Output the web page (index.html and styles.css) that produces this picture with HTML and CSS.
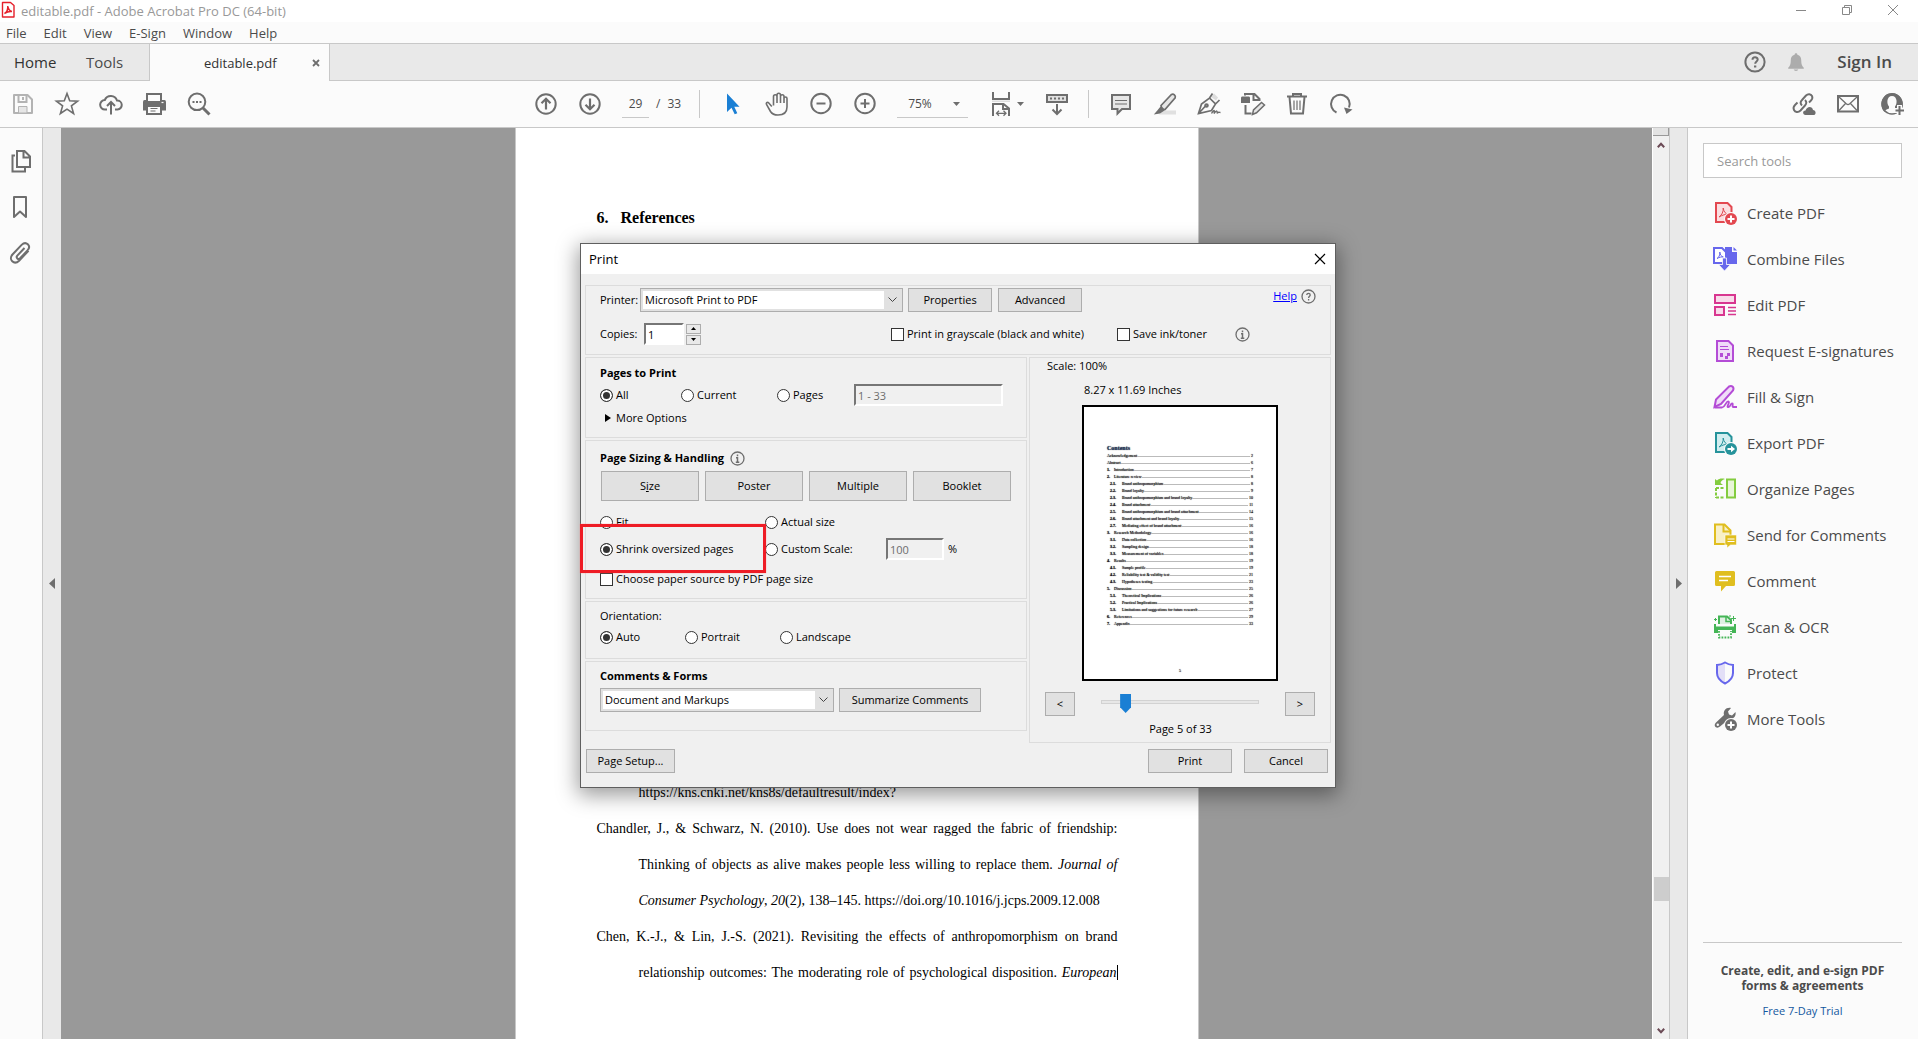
FILE: index.html
```html
<!DOCTYPE html>
<html lang="en">
<head>
<meta charset="utf-8">
<title>editable.pdf - Adobe Acrobat Pro DC (64-bit)</title>
<link rel="stylesheet" href="styles.css">
</head>
<body>
<header class="titlebar">
  <svg class="app-icon" viewBox="0 0 14 16"><path d="M1.500.500h8l3.500 3v11.500h-11.500z" fill="#fff" stroke="#e5202b" stroke-width="1.400" stroke-linejoin="round"/><path d="M3.500 11.500c2-1 3.500-4 3.300-7.500.4 3 2 5 4.200 5.500-2.500-.4-5 .3-7.500 2z" fill="none" stroke="#e5202b" stroke-width="1.500"/></svg>
  <span class="title">editable.pdf - Adobe Acrobat Pro DC (64-bit)</span>
  <div class="window-controls">
    <button aria-label="Minimize"><svg viewBox="0 0 12 12"><path d="M1 6.500h10"/></svg></button>
    <button aria-label="Restore"><svg viewBox="0 0 12 12"><path d="M1.500 3.500h7v7h-7zM3.500 3.500v-2h7v7h-2"/></svg></button>
    <button aria-label="Close"><svg viewBox="0 0 12 12"><path d="M1 1l10 10M11 1L1 11"/></svg></button>
  </div>
</header>
<nav class="menubar">
  <button>File</button><button>Edit</button><button>View</button><button>E-Sign</button><button>Window</button><button>Help</button>
</nav>
<div class="tabbar">
  <button class="tab-home">Home</button>
  <button class="tab-tools">Tools</button>
  <div class="tab-doc"><span>editable.pdf</span><button aria-label="Close tab"><svg viewBox="0 0 8 8"><path d="M1 1l6 6M7 1L1 7" stroke="#6e6e6e" stroke-width="1.800"/></svg></button></div>
  <div class="tab-rest">
    <button class="icon-btn" aria-label="Help"><svg class="ic" viewBox="0 0 24 24"><circle cx="12" cy="12" r="9.600"/><path d="M9.500 9.800c0-3.300 5.200-3.200 5.200-.2 0 1.900-2.500 1.900-2.500 4.200"/><path d="M11 15.500h2.300v2H11z" class="solid"/></svg></button>
    <button class="icon-btn bell" aria-label="Notifications"><svg viewBox="0 0 24 24"><path d="M12 2.500c1 0 1.500.7 1.500 1.500 3 .8 4.200 3 4.200 6 0 4.500 1 6.500 2.800 8.300v1H3.500v-1C5.300 16.500 6.300 14.500 6.300 10c0-3 1.200-5.200 4.200-6 0-.8.5-1.500 1.500-1.500zM9.500 20.300h5c-.4 2-4.600 2-5 0z" fill="#acacac"/></svg></button>
    <button class="sign-in">Sign In</button>
  </div>
</div>
<div class="toolbar">
  <div class="tools-left">
    <button class="icon-btn" aria-label="Save"><svg class="ic faint" viewBox="0 0 24 24"><path d="M3 3h13.500L21 7.500V21H3z" stroke-linejoin="round"/><path d="M7.500 3v7h8V3M12 5v3"/><path d="M7.500 21v-6.500h8.500V21z" fill="#e6e6e6" stroke-width="1"/></svg></button>
    <button class="icon-btn" aria-label="Star"><svg class="ic" viewBox="0 0 24 24"><path d="M12 1.500l2.700 7.300 7.900.3-6.200 4.800 2.200 7.600L12 17.100l-6.600 4.400 2.200-7.600L1.400 9.100l7.900-.3z" stroke-width="1.600"/></svg></button>
    <button class="icon-btn" aria-label="Share to cloud"><svg class="ic" viewBox="0 0 24 24"><path d="M8 17.500H6A4.700 4.700 0 0 1 5.800 8 6.500 6.500 0 0 1 18 8.500a4.500 4.500 0 0 1 .5 9H16"/><path d="M12 22.500V10.500M8 14l4-4 4 4"/></svg></button>
    <button class="icon-btn" aria-label="Print"><svg class="ic" viewBox="0 0 24 24"><path d="M0 10q0-2 1.500-2h20Q23 8 23 10v8.500H0z" class="solid"/><path d="M4 9V2h14v7" fill="#fbfbfb"/><path d="M4 14h14v8H4z" fill="#fbfbfb"/><path d="M7.500 16.500h7M7.500 19h5" stroke-width="1.200"/><path d="M18.500 10.500h2" stroke="#fbfbfb" stroke-width="1.200"/></svg></button>
    <button class="icon-btn" aria-label="Find"><svg class="ic" viewBox="0 0 24 24"><circle cx="10" cy="9.800" r="8.300"/><path d="M16 16l6.500 6.500" stroke-width="3"/><path d="M5.500 9h2v2h-2zM9 9h2v2H9zM12.500 9h2v2h-2z" class="solid"/></svg></button>
  </div>
  <div class="tools-mid">
    <button class="icon-btn" aria-label="Previous page"><svg class="ic" viewBox="0 0 24 24"><circle cx="12" cy="12" r="9.700"/><path d="M12 17.500V7M7.500 11.300L12 6.800l4.500 4.500" stroke-width="2.200"/></svg></button>
    <button class="icon-btn" aria-label="Next page"><svg class="ic" viewBox="0 0 24 24"><circle cx="12" cy="12" r="9.700"/><path d="M12 6.500V17M7.500 12.700l4.500 4.500 4.500-4.500" stroke-width="2.200"/></svg></button>
    <div class="page-nav"><input class="page-num" aria-label="Page number" value="29"><span>/</span><span>33</span></div>
    <i class="sep"></i>
    <button class="icon-btn select-tool" aria-label="Select"><svg viewBox="0 0 24 24"><path d="M6 1.500V20l4.500-4.300 3.200 6.500 2.600-1-3-6.500h5.200z" fill="#1a7fd4"/></svg></button>
    <button class="icon-btn" aria-label="Pan"><svg class="ic" viewBox="0 0 24 24"><path d="M6.800 14.500L3.600 10.800C2 9.800.8 11 1.500 12.300l4 7.200C7 22 9 23 13 23c6 0 9-3 9-8V6.500c0-2-3-2-3 0V11 4.500c0-2.300-3.500-2.300-3.500 0V11 3c0-2.300-3.500-2.300-3.500 0v8V4.500c0-2.300-3.500-2.300-3.500 0v9" stroke-width="1.600"/></svg></button>
    <button class="icon-btn" aria-label="Zoom out"><svg class="ic" viewBox="0 0 24 24"><circle cx="12" cy="11.500" r="9.700"/><path d="M7.500 11.500h9"/></svg></button>
    <button class="icon-btn" aria-label="Zoom in"><svg class="ic" viewBox="0 0 24 24"><circle cx="12" cy="11.500" r="9.700"/><path d="M7.500 11.500h9M12 7v9"/></svg></button>
    <button class="zoom-level"><span>75%</span><svg class="tri" viewBox="0 0 7 4"><path d="M0 0h7L3.500 4z"/></svg></button>
    <button class="icon-btn fit" aria-label="Fit width"><svg class="ic" viewBox="0 0 24 24"><path d="M4 0v7h16V0" /><path d="M3 8.500h18v1.500H3z" fill="#ddd" stroke="none"/><path d="M4 24V12h10.500L20 16.500V24M14 12v5h5.500"/><path d="M8 21.300h9M10 18.800l-2.500 2.500 2.500 2.500M14.500 18.800l2.500 2.500-2.500 2.500" stroke-width="1.300"/></svg><svg class="tri" viewBox="0 0 7 4"><path d="M0 0h7L3.500 4z"/></svg></button>
    <button class="icon-btn" aria-label="Read mode"><svg class="ic" viewBox="0 0 24 24"><path d="M2 3h20v7H2z" fill="#e0e0e0"/><path d="M5 6.500h14" stroke-dasharray="2 2"/><path d="M12 12v9.500M7.500 17.500l4.500 4.500 4.500-4.500"/></svg></button>
    <i class="sep wide"></i>
    <button class="icon-btn" aria-label="Comment"><svg class="ic" viewBox="0 0 24 24"><path d="M3 3h18v14h-8l-4.500 4.500V17H3z" fill="#e6e6e6"/><path d="M6 8.500h12M6 12h12" stroke-width="1.200"/></svg></button>
    <button class="icon-btn" aria-label="Highlight"><svg class="ic" viewBox="0 0 24 24"><path d="M10 18.500h13v4H6z" fill="#e0e0e0" stroke="none"/><path d="M8 13.500L18.500 2.500c2-1.200 4.500 1 3.700 3.300L12 17.500c-1.500.5-4-2-4-4z" fill="#e6e6e6" stroke-width="1.700"/><path d="M7.500 14.500l4 4L7 21.500.8 22.500l3.500-4z" class="solid"/></svg></button>
    <button class="icon-btn" aria-label="Sign"><svg class="ic" viewBox="0 0 24 24"><path d="M14 5l3-3.500 4 4-2 3z" fill="#ddd" stroke="none"/><path d="M1.500 21.500L4.500 12 12.500 6l6 6-4 6.500-13 3zM2 21l6.500-7M12.500 6l3-4.500M18.500 12l4-4" stroke-width="1.700"/><circle cx="9.500" cy="13.500" r="1.300"/><path d="M14.500 21.500c3-5 3.500-3 2.500 0 3-4 3.500-2.500 3 0 1-2 2.500-1 3.500-1" stroke-width="1.400"/></svg></button>
    <button class="icon-btn" aria-label="Edit document"><svg class="ic" viewBox="0 0 24 24"><path d="M0 6q0-1.500 1-1.500h7q1 0 1 1.500v5H0z" class="solid"/><path d="M4 3.500V2h9.500L18.500 7v2M12.500 2v6h5.500M4.500 13v8.500h6"/><path d="M11.500 22.500l1-4.500 8-7.500 3 2.500-8 7.800z" stroke-width="1.500" fill="#e6e6e6"/></svg></button>
    <button class="icon-btn" aria-label="Delete"><svg class="ic" viewBox="0 0 24 24"><path d="M2 4.500h20M8 4V2h8v2M4.500 5L6 21.500h12L19.500 5"/><path d="M9 8.500v9.500M12 8.500v9.500M15 8.500v9.500" stroke-width="1.200"/></svg></button>
    <button class="icon-btn" aria-label="Rotate"><svg class="ic" viewBox="0 0 24 24"><path d="M7.500 20.500A9.300 9.300 0 1 1 20 15.500"/><path d="M15 15.500l8.500 2-6 4.500z" class="solid"/></svg></button>
  </div>
  <div class="tools-right">
    <button class="icon-btn" aria-label="Copy link"><svg class="ic" viewBox="0 0 24 24"><path d="M10 13.500c-2-2-2-3.500 0-5.500l4-4.500c2-2 5-1.500 6 .5s.5 3-1 4.500l-2 2M13 8c2 2 1.800 3.500 0 5.500l-4.500 5C6 21 3 20 2 18s-.5-3.500 1-5l2.500-2.500" stroke-width="1.900"/><path d="M13.500 23c-3-.2-3.300-4.500 0-4.500C15 13.500 20.500 14 21 18c3 0 3.500 4.500 1 5z" class="solid" /></svg></button>
    <button class="icon-btn" aria-label="Email"><svg class="ic" viewBox="0 0 24 24"><path d="M2 4h20v15.500H2z"/><path d="M3 5l7.500 7q1.500 1 3 0L21 5M3 18.500l6.500-7M21 18.500l-6.500-7" stroke-width="1.300"/></svg></button>
    <button class="icon-btn" aria-label="Add people"><svg class="ic" viewBox="0 0 24 24"><circle cx="12" cy="12" r="10" stroke-width="1.500"/><path d="M12 1C3 1-2 12 4.500 20c1-2.500 3-3 4.500-3.500v-2C6.500 12 6.500 4 12 4s5.500 8 3 10.500v2l3 1.500 4-1C25 9 20 1 12 1z" class="solid"/><path d="M19.500 13v11M14.500 18.500H24" stroke="#fbfbfb" stroke-width="5"/><path d="M19.500 14v9M15.500 18.500H24"/></svg></button>
  </div>
</div>
<main class="workspace">
  <aside class="rail">
    <button aria-label="Page thumbnails"><svg class="ic" viewBox="0 0 24 24"><path d="M9 2h7.500l5.500 5.500V18H9zM15.500 2v6.500H22"/><path d="M7 6.500H4.500V22.500h12.500V19" /></svg></button>
    <button aria-label="Bookmarks"><svg class="ic" viewBox="0 0 24 24"><path d="M6 2h12v20l-6-5.500L6 22z" stroke-linejoin="round"/></svg></button>
    <button aria-label="Attachments"><svg class="ic" viewBox="0 0 24 24"><path d="M16.500 7l-7.200 7.600c-1.800 2 .9 4.600 2.800 2.700l7.400-7.900c4.200-4.600-1.400-9.800-5.900-5.500L4.500 13.500c-4.500 5 1.600 11 6.600 6.200l9.400-10" stroke-width="2"/></svg></button>
  </aside>
  <button class="strip strip-left" aria-label="Collapse navigation"><svg viewBox="0 0 6 11"><path d="M6 0v11L0 5.500z"/></svg></button>
  <section class="doc">
    <article class="sheet">
      <h1><span>6.</span>References</h1>
      <div class="refs">
        <p class="last in">https://kns.cnki.net/kns8s/defaultresult/index?</p>
        <p>Chandler, J., &amp; Schwarz, N. (2010). Use does not wear ragged the fabric of friendship:</p>
        <p class="in">Thinking of objects as alive makes people less willing to replace them. <em>Journal of</em></p>
        <p class="last in"><em>Consumer Psychology</em>, <em>20</em>(2), 138–145. https://doi.org/10.1016/j.jcps.2009.12.008</p>
        <p>Chen, K.-J., &amp; Lin, J.-S. (2021). Revisiting the effects of anthropomorphism on brand</p>
        <p class="in caret">relationship outcomes: The moderating role of psychological disposition. <em>European</em></p>
      </div>
    </article>
  </section>
  <div class="scrollbar">
    <i class="splitter"></i>
    <svg viewBox="0 0 8 6"><path d="M.8 5.200L4 1.800l3.200 3.400"/></svg>
    <i class="thumb"></i>
    <svg viewBox="0 0 8 6"><path d="M.8.800L4 4.200 7.200.8"/></svg>
  </div>
  <button class="strip strip-right" aria-label="Collapse tools"><svg viewBox="0 0 6 11"><path d="M0 0v11l6-5.500z"/></svg></button>
  <aside class="panel">
    <input class="search" type="search" placeholder="Search tools" aria-label="Search tools">
    <ul>
      <li><a href="#"><svg viewBox="0 0 24 24"><path d="M3 2h11.500l4 4v15H3z" fill="#fbdfe1" stroke="#e34850" stroke-width="2"/><path d="M6 16c3-2 4.500-5.500 4.200-9 .6 4 2.500 6 5.300 6.500-3-.5-6 .5-9.500 2.500z" fill="none" stroke="#e34850"/><circle cx="18" cy="18" r="7" fill="#fbfbfb"/><circle cx="18" cy="18" r="6" fill="#e34850"/><path d="M18 14.500v7M14.500 18h7" stroke="#fff" stroke-width="2"/></svg>Create PDF</a></li>
      <li><a href="#"><svg viewBox="0 0 24 24"><path d="M1 1h8l4 4v11H1z" fill="#fff" stroke="#6767ec" stroke-width="2"/><path d="M12 0h7v5h5v12H12z" fill="#6767ec"/><path d="M20.500 0L24 3.500h-3.500z" fill="#6767ec"/><path d="M4 11.500c2-1 3-3.500 2.800-6.500.4 3 1.500 4.500 3.500 5-2-.3-4 .3-6.300 1.500z" fill="none" stroke="#6767ec"/><path d="M9.500 11h4v6.500h4L11.500 24l-6-6.500h4z" fill="#6767ec" stroke="#fbfbfb" stroke-width=".8"/></svg>Combine Files</a></li>
      <li><a href="#"><svg viewBox="0 0 24 24"><g fill="#f8dcea" stroke="#d83790" stroke-width="2"><path d="M2 2h20v8H2zM2 14h9v8H2z"/></g><path d="M15 14.500h8M15 18h8M15 21.500h8" stroke="#d83790" stroke-width="1.300"/></svg>Edit PDF</a></li>
      <li><a href="#"><svg viewBox="0 0 24 24"><path d="M4 2h11.500l4.500 4.500V22H4z" fill="#f0dcf8" stroke="#b44cd6" stroke-width="2"/><path d="M7 7.500h8M7 10.500h9" stroke="#b44cd6"/><path d="M7 14h3v4H7zM14 14h3v3h-3zM12 17h3v3h-3z" fill="#b44cd6"/></svg>Request E-signatures</a></li>
      <li><a href="#"><svg viewBox="0 0 24 24"><path d="M1.500 22l1.500-7.500L16 1.500c3-1.500 5.500 1 4 4L8 19z" fill="#f0dcf8" stroke="#b44cd6" stroke-width="2"/><path d="M1.500 22.500H9c4-1 4-7 6.500-6 2 1-3 6 0 5.500 2 0 2.500-4.500 4-3.500 1 1-1 3.500 1 3.500h3.500" fill="none" stroke="#b44cd6" stroke-width="1.800"/></svg>Fill &amp; Sign</a></li>
      <li><a href="#"><svg viewBox="0 0 24 24"><path d="M3 2h11.500l4 4v15H3z" fill="#d3eef0" stroke="#26939b" stroke-width="2"/><path d="M6 16c3-2 4.500-5.500 4.200-9 .6 4 2.500 6 5.300 6.500-3-.5-6 .5-9.500 2.500z" fill="none" stroke="#26939b"/><circle cx="18" cy="18" r="7" fill="#fbfbfb"/><circle cx="18" cy="18" r="6" fill="#26939b"/><path d="M14.500 18h4" stroke="#fff" stroke-width="2"/><path d="M18 14.800l4 3.200-4 3.200z" fill="#fff"/></svg>Export PDF</a></li>
      <li><a href="#"><svg viewBox="0 0 24 24"><path d="M14 2.500h8v18h-8z" fill="#e8f5d8" stroke="#83cc3f" stroke-width="2"/><path d="M3 11h9M3 20.500h9M3 11v10" fill="none" stroke="#83cc3f" stroke-width="2" stroke-dasharray="3 1.500"/><path d="M2 2l2 1.500C6 1.500 9 1 12 2 9 3 8 4 7.500 6L10 8H2z" fill="#83cc3f"/></svg>Organize Pages</a></li>
      <li><a href="#"><svg viewBox="0 0 24 24"><path d="M2 1.500h9.500l6 6V21H2z" fill="#f8f0c8" stroke="#e0be1f" stroke-width="2"/><path d="M10.500 2v6.500H17" fill="none" stroke="#e0be1f" stroke-width="2"/><path d="M12 12h11.500v10h-6L14 25v-3h-2z" fill="#e0be1f" stroke="#fbfbfb" stroke-width=".6"/><path d="M14.500 16h7M14.500 18.500h7" stroke="#fff" stroke-width="1.200"/></svg>Send for Comments</a></li>
      <li><a href="#"><svg viewBox="0 0 24 24"><path d="M3.500 2h17q1.500 0 1.500 1.500v12q0 1.500-1.500 1.500H13l-5 5.500V17H3.500Q2 17 2 15.500v-12Q2 2 3.500 2z" fill="#e0be1f"/><path d="M6 7.500h12M6 11.500h9" stroke="#fff" stroke-width="1.500"/></svg>Comment</a></li>
      <li><a href="#"><svg viewBox="0 0 24 24"><path d="M6 9V1.500h8L18 5v4" fill="#dff0e2" stroke="#44b556" stroke-width="2"/><path d="M13 2v4.500h5" fill="none" stroke="#44b556" stroke-width="1.500"/><path d="M1 9h2v2.500h18V9h2v9h-4v-3H5v3H1z" fill="#44b556"/><path d="M6 16v6.500h12V16" fill="none" stroke="#44b556" stroke-width="1.800" stroke-dasharray="1.800 1.200"/><path d="M20.500 1v5M18 3.500h5M2.500 3v3M1 4.500h3M17 0v2" stroke="#44b556"/></svg>Scan &amp; OCR</a></li>
      <li><a href="#"><svg viewBox="0 0 24 24"><path d="M12 1.500v21C6 19.500 4 16.500 4 12V4z" fill="#e3dff7"/><path d="M12 1.500c2.500 1.500 5 2.300 8 2.500v8c0 4.500-2 7.500-8 10.500C6 19.500 4 16.500 4 12V4c3-.2 5.500-1 8-2.500z" fill="none" stroke="#6767ec" stroke-width="2"/></svg>Protect</a></li>
      <li><a href="#"><svg viewBox="0 0 24 24"><path d="M11 8c-1-4 2-8 7-7l-3 3.500 1 3 3 1L22.500 5c1 5-3 7.500-6.500 7L7 19.500C4 22.500-.5 19 3 15.500z" fill="#6e6e6e"/><circle cx="4.800" cy="17.800" r="1.200" fill="#fbfbfb"/><circle cx="18" cy="18" r="7" fill="#fbfbfb"/><circle cx="18" cy="18" r="6" fill="#6e6e6e"/><path d="M18 14.500v7M14.500 18h7" stroke="#fff" stroke-width="2"/></svg>More Tools</a></li>
    </ul>
    <footer>
      <strong>Create, edit, and e-sign PDF forms &amp; agreements</strong>
      <a href="#">Free 7-Day Trial</a>
    </footer>
  </aside>
</main>

<section class="dialog" role="dialog" aria-label="Print">
  <header><h2>Print</h2><button aria-label="Close"><svg viewBox="0 0 12 12"><path d="M1 1l10 10M11 1L1 11" stroke="#000" stroke-width="1.200"/></svg></button></header>
  <div class="dialog-body">
    <div class="group top">
      <div class="row printer">
        <label for="printer">Printer:</label>
        <div class="combo"><select id="printer"><option>Microsoft Print to PDF</option></select><svg viewBox="0 0 9 6"><path d="M.5.500l4 4 4-4"/></svg></div>
        <button class="btn">Properties</button>
        <button class="btn">Advanced</button>
        <div class="help"><a href="#">Help</a><svg class="info" viewBox="0 0 15 15"><circle cx="7.500" cy="7.500" r="6.500"/><path d="M5.800 6c0-2.200 3.400-2.200 3.400 0 0 1.300-1.600 1.300-1.600 3M7.600 10v1.500"/></svg></div>
      </div>
      <div class="row copies">
        <div class="spin"><label for="copies">Copies:</label><input id="copies" class="sunken" value="1"><div class="arrows"><button aria-label="More copies"><svg viewBox="0 0 5 3"><path d="M0 3h5L2.500 0z"/></svg></button><button aria-label="Fewer copies"><svg viewBox="0 0 5 3"><path d="M0 0h5L2.500 3z"/></svg></button></div></div>
        <label class="opt"><input type="checkbox">Print in grayscale (black and white)</label>
        <label class="opt"><input type="checkbox">Save ink/toner</label>
        <svg class="info" viewBox="0 0 15 15"><circle cx="7.500" cy="7.500" r="6.500"/><path d="M7.500 3.500v1.800M6 6.800h1.500v4M5.800 11.200h3.500" stroke-width="1.500"/></svg>
      </div>
    </div>
    <div class="columns">
      <div class="stack">
        <div class="group pages">
          <h3>Pages to Print</h3>
          <div class="row range">
            <label class="opt"><input type="radio" name="range" checked>All</label>
            <label class="opt"><input type="radio" name="range">Current</label>
            <label class="opt"><input type="radio" name="range">Pages</label>
            <input class="sunken" value="1 - 33" aria-label="Page range" disabled>
          </div>
          <button class="more"><svg viewBox="0 0 6 8"><path d="M0 0v8l6-4z"/></svg>More Options</button>
        </div>
        <div class="group sizing">
          <h3>Page Sizing &amp; Handling <svg class="info" viewBox="0 0 15 15"><circle cx="7.500" cy="7.500" r="6.500"/><path d="M7.500 3.500v1.800M6 6.800h1.500v4M5.800 11.200h3.500" stroke-width="1.500"/></svg></h3>
          <div class="modes"><button class="btn">S<u>i</u>ze</button><button class="btn">Poster</button><button class="btn">Multiple</button><button class="btn">Booklet</button></div>
          <div class="row scale">
            <label class="opt"><input type="radio" name="scale">Fit</label>
            <label class="opt"><input type="radio" name="scale">Actual size</label>
          </div>
          <div class="row scale custom">
            <label class="opt"><input type="radio" name="scale" checked>Shrink oversized pages</label>
            <label class="opt"><input type="radio" name="scale">Custom Scale:</label>
            <input class="sunken" value="100" aria-label="Custom scale" disabled><span>%</span>
          </div>
          <label class="opt"><input type="checkbox">Choose paper source by PDF page size</label>
        </div>
        <div class="group orient">
          <div>Orientation:</div>
          <div class="row">
            <label class="opt"><input type="radio" name="orient" checked>Auto</label>
            <label class="opt"><input type="radio" name="orient">Portrait</label>
            <label class="opt"><input type="radio" name="orient">Landscape</label>
          </div>
        </div>
        <div class="group forms">
          <h3><label for="forms">Comments &amp; Forms</label></h3>
          <div class="row">
            <div class="combo"><select id="forms"><option>Document and Markups</option></select><svg viewBox="0 0 9 6"><path d="M.5.500l4 4 4-4"/></svg></div>
            <button class="btn">Summarize Comments</button>
          </div>
        </div>
      </div>
      <div class="group preview">
        <div>Scale: 100%</div>
        <div class="dims">8.27 x 11.69 Inches</div>
        <div class="thumbnail">
          <h4>Contents</h4>
          <ol class="toc">
            <li><span>Acknowledgement</span><i></i>2</li>
            <li><span>Abstract</span><i></i>6</li>
            <li><b>1.</b><span>Introduction</span><i></i>7</li>
            <li><b>2.</b><span>Literature review</span><i></i>8</li>
            <li class="sub"><b>2.1.</b><span>Brand anthropomorphism</span><i></i>8</li>
            <li class="sub"><b>2.2.</b><span>Brand loyalty</span><i></i>9</li>
            <li class="sub"><b>2.3.</b><span>Brand anthropomorphism and brand loyalty</span><i></i>10</li>
            <li class="sub"><b>2.4.</b><span>Brand attachment</span><i></i>11</li>
            <li class="sub"><b>2.5.</b><span>Brand anthropomorphism and brand attachment</span><i></i>14</li>
            <li class="sub"><b>2.6.</b><span>Brand attachment and brand loyalty</span><i></i>15</li>
            <li class="sub"><b>2.7.</b><span>Mediating effect of brand attachment</span><i></i>16</li>
            <li><b>3.</b><span>Research Methodology</span><i></i>16</li>
            <li class="sub"><b>3.1.</b><span>Data collection</span><i></i>16</li>
            <li class="sub"><b>3.2.</b><span>Sampling design</span><i></i>18</li>
            <li class="sub"><b>3.3.</b><span>Measurement of variables</span><i></i>18</li>
            <li><b>4.</b><span>Results</span><i></i>19</li>
            <li class="sub"><b>4.1.</b><span>Sample profile</span><i></i>19</li>
            <li class="sub"><b>4.2.</b><span>Reliability test &amp; validity test</span><i></i>21</li>
            <li class="sub"><b>4.3.</b><span>Hypotheses testing</span><i></i>23</li>
            <li><b>5.</b><span>Discussion</span><i></i>25</li>
            <li class="sub"><b>5.1.</b><span>Theoretical Implications</span><i></i>26</li>
            <li class="sub"><b>5.2.</b><span>Practical Implications</span><i></i>26</li>
            <li class="sub"><b>5.3.</b><span>Limitations and suggestions for future research</span><i></i>27</li>
            <li><b>6.</b><span>References</span><i></i>29</li>
            <li><b>7.</b><span>Appendix</span><i></i>33</li>
          </ol>
          <div class="folio">5</div>
        </div>
        <div class="pager">
          <button class="btn">&lt;</button>
          <input type="range" min="1" max="33" value="5" aria-label="Preview page">
          <button class="btn">&gt;</button>
        </div>
        <div class="count">Page 5 of 33</div>
      </div>
    </div>
    <div class="actions">
      <button class="btn setup">Page Setup...</button>
      <button class="btn">Print</button>
      <button class="btn">Cancel</button>
    </div>
  </div>
  <div class="callout"></div>
</section>
</body>
</html>
```
FILE: styles.css
```css
* { box-sizing: border-box; }
body {
  margin: 0;
  height: 100vh;
  display: flex;
  flex-direction: column;
  overflow: hidden;
  background: #fbfbfb;
  color: #4b4b4b;
  font: 14px/20px "Open Sans", "Noto Sans", sans-serif;
}
button, input, select { font: inherit; color: inherit; margin: 0; }
button { background: none; border: 0; padding: 0; }
a { color: inherit; text-decoration: none; }
h1, h2, h3, h4, p, ul, ol { margin: 0; padding: 0; }
ul, ol { list-style: none; }
svg { display: block; flex: none; overflow: visible; }

.ic { width: 24px; height: 24px; fill: none; stroke: #6e6e6e; stroke-width: 2; }
.ic .solid { fill: #6e6e6e; stroke: none; }
.ic.faint { stroke: #b3b3b3; }
.tri { width: 7px; height: 4px; fill: #6e6e6e; }

/* Window chrome */
.titlebar { display: flex; align-items: center; height: 22px; padding-left: 1px; background: #fff; color: #999; }
.app-icon { width: 14px; height: 16px; margin-bottom: 2px; }
.title { margin-left: 6px; font-size: 13px; }
.window-controls { display: flex; margin-left: auto; padding: 0 2px 3px 0; }
.window-controls button { width: 46px; display: flex; justify-content: center; }
.window-controls svg { width: 12px; height: 12px; fill: none; stroke: #888; }

.menubar { display: flex; gap: 17px; height: 22px; padding-left: 6px; border-bottom: 1px solid #c8c8c8; font-size: 13px; }

.tabbar { display: flex; height: 37px; background: #e9e9e9; font-size: 15px; }
.tabbar > * { border-bottom: 1px solid #c8c8c8; }
.tab-home, .tab-tools { text-align: left; padding-left: 14px; }
.tab-home { width: 72px; color: #323232; }
.tab-tools { width: 77px; }
.tab-doc {
  display: flex; align-items: center; justify-content: space-between;
  width: 181px; padding: 0 9px 0 54px;
  background: #fbfbfb; border: 1px solid #c8c8c8; border-width: 0 1px;
  font-size: 13px; color: #323232;
}
.tabbar .tab-doc { border-bottom: 0; }
.tab-doc svg { width: 8px; height: 8px; }
.tab-rest { flex: 1; display: flex; align-items: center; justify-content: flex-end; padding-right: 26px; }
.sign-in { margin-left: 22px; font-size: 17px; font-weight: 600; }

.icon-btn { width: 44px; display: flex; justify-content: center; align-items: center; }
.bell { width: 38px; }
.bell svg { width: 22px; height: 22px; }

.toolbar { display: flex; height: 47px; border-bottom: 1px solid #c8c8c8; }
.toolbar > div { display: flex; align-items: center; }
.tools-left { flex: 0 0 524px; padding-left: 1px; }
.tools-right { margin-left: auto; padding-right: 4px; }
.page-nav { display: flex; gap: 7px; margin-left: 10px; height: 27px; font-size: 12px; line-height: 26px; }
.page-num { width: 27px; text-align: center; border: 0; border-bottom: 1px solid #c8c8c8; background: none; padding: 0; }
.sep { width: 1px; height: 28px; margin: 0 11px 0 18px; background: #c8c8c8; }
.sep.wide { margin: 0 10px 0 9px; }
.select-tool svg { width: 24px; height: 24px; }
.zoom-level {
  display: flex; align-items: center; justify-content: space-between;
  width: 71px; height: 27px; margin-left: 10px; padding: 0 8px 0 11px;
  border-bottom: 1px solid #c8c8c8; font-size: 12px;
}
.fit { width: 67px; gap: 4px; padding-left: 10px; }

/* Workspace */
.workspace { flex: 1; display: flex; min-height: 0; }
.rail { flex: none; width: 43px; padding: 21px 0 0 8px; display: flex; flex-direction: column; gap: 22px; border-right: 1px solid #c8c8c8; }
.rail button { width: 24px; }
.strip { flex: none; width: 18px; display: flex; align-items: center; justify-content: center; background: #e9e9e9; }
.strip svg { width: 6px; height: 11px; fill: #6e6e6e; }
.strip-right { width: 19px; border: 1px solid #c8c8c8; border-width: 0 1px; }
.doc { flex: 1; display: flex; justify-content: center; background: #999; overflow: hidden; }
.sheet {
  width: 684px; padding: 80px 80px 0 81px;
  background: #fff; border: 1px solid #c8c8c8; border-width: 0 1px;
  color: #000; font: 14px/36px "Liberation Serif", "Times New Roman", serif;
}
.sheet h1 { font-size: 16px; line-height: 20px; }
.sheet h1 span { display: inline-block; width: 24px; }
.refs { margin-top: 547px; }
.refs p { text-align: justify; text-align-last: justify; white-space: nowrap; }
.refs .in { padding-left: 42px; }
.refs .last { text-align-last: left; }
.caret em { border-right: 1px solid #000; }

.scrollbar { flex: none; width: 17px; display: flex; flex-direction: column; align-items: center; background: #f0f0f0; border-left: 1px solid #fff; }
.scrollbar svg { width: 8px; height: 6px; margin: 6px 0 5px; fill: none; stroke: #6b4a55; stroke-width: 2; }
.splitter { width: 100%; height: 8px; background: #e3e3e3; border: 1px solid #999; border-width: 0 1px 1px 0; }
.thumb { width: 15px; height: 24px; margin: auto 0 121px; background: #cdcdcd; }

.panel { flex: none; width: 230px; display: flex; flex-direction: column; padding: 15px 16px 20px 15px; }
.search { height: 35px; padding: 0 13px; border: 1px solid #c8c8c8; background: #fff; font-size: 13px; }
.search::placeholder { color: #999; }
.panel ul { padding-top: 12px; }
.panel li a { display: flex; align-items: center; gap: 10px; height: 46px; padding-left: 10px; font-size: 15px; }
.panel li svg { width: 24px; height: 24px; }
.panel footer { display: flex; flex-direction: column; align-items: center; gap: 10px; margin-top: auto; padding: 20px 8px 0; border-top: 1px solid #c8c8c8; text-align: center; }
.panel footer strong { font-size: 12px; line-height: 15px; }
.panel footer a { font-size: 11px; line-height: 16px; color: #1358a0; }

/* Print dialog */
.dialog {
  position: absolute; top: 243px; left: calc(50% - 379px); width: 756px;
  border: 1px solid #5f5f5f; background: #f0f0f0; color: #000;
  box-shadow: 0 5px 20px 2px rgba(0, 0, 0, .4);
  font-size: 11px; line-height: 16px;
}
.dialog > header { display: flex; align-items: center; justify-content: space-between; height: 30px; padding: 0 9px 0 8px; background: #fff; }
.dialog h2 { font-size: 13px; font-weight: 400; }
.dialog > header svg { width: 12px; height: 12px; }
.dialog-body { display: flex; flex-direction: column; gap: 2px; padding: 11px 4px 14px; }
.group { display: flex; flex-direction: column; padding: 0 14px; border: 1px solid #dcdcdc; }
.row { display: flex; align-items: center; }
.dialog h3 { font-size: 11px; font-weight: 700; display: flex; align-items: center; gap: 6px; }
.btn { height: 24px; background: #e1e1e1; border: 1px solid #adadad; }
.opt { display: flex; align-items: center; gap: 3px; white-space: nowrap; }
.opt input { appearance: none; flex: none; width: 13px; height: 13px; border: 1px solid #333; background: #fff; }
.opt input[type="radio"] { border-radius: 50%; }
.opt input[type="radio"]:checked { background: #333; box-shadow: inset 0 0 0 2px #fff; }
.sunken { height: 22px; padding: 0 2px; border: 2px solid; border-color: #767676 #fff #fff #767676; background: #fff; }
.sunken:disabled { background: #f0f0f0; color: #6d6d6d; }
.combo { display: flex; align-items: center; height: 24px; padding: 2px; gap: 4px; background: #e1e1e1; border: 1px solid #adadad; }
.combo select { flex: 1; height: 18px; padding: 0 2px; appearance: none; border: 0; background: #fff; line-height: 16px; }
.combo svg { width: 9px; height: 6px; margin-right: 3px; fill: none; stroke: #444; }
.info { width: 15px; height: 15px; fill: none; stroke: #6e6e6e; stroke-width: 1.3; }

.top { gap: 11px; padding: 2px 14px 9px; }
.printer .combo { width: 263px; margin-right: 5px; }
.printer label { width: 40px; }
.printer .btn { width: 84px; margin-right: 6px; }
.help { display: flex; align-items: center; gap: 4px; margin-left: auto; height: 16px; align-self: flex-start; }
.help a { color: #00f; text-decoration: underline; }
.copies { display: grid; grid-template-columns: 291px 226px 118px auto; }
.spin { display: flex; align-items: center; }
.spin label { width: 44px; }
.spin .sunken { width: 40px; }
.arrows { display: flex; flex-direction: column; gap: 1px; margin-left: 2px; }
.arrows button { width: 15px; height: 10px; display: flex; align-items: center; justify-content: center; background: #e9e9e9; border: 1px solid #adadad; }
.arrows svg { width: 5px; height: 3px; }

.columns { display: grid; grid-template-columns: 442px 1fr; gap: 2px; align-items: start; }
.stack { display: flex; flex-direction: column; gap: 2px; }
.pages { padding-top: 7px; padding-bottom: 10px; gap: 3px; }
.range { display: grid; grid-template-columns: 81px 96px 77px 149px; }
.more { display: flex; align-items: center; gap: 5px; height: 18px; padding-left: 5px; }
.more svg { width: 6px; height: 8px; }
.sizing { padding-top: 9px; padding-bottom: 11px; }
.modes { display: grid; grid-template-columns: repeat(4, 98px); gap: 6px; margin: 5px 0 13px 1px; }
.modes .btn { height: 30px; }
.scale { display: grid; grid-template-columns: 165px 121px 58px auto; column-gap: 0; }
.custom { margin: 8px 0 11px; }
.custom span { padding-left: 4px; }
.orient { gap: 5px; padding-top: 6px; padding-bottom: 13px; }
.orient .row { display: grid; grid-template-columns: 85px 95px auto; }
.forms { gap: 4px; padding-top: 6px; padding-bottom: 18px; }
.forms .combo { width: 234px; margin-right: 5px; }
.forms .btn { width: 142px; }

.preview { padding: 0 14px 5px 17px; }
.dims { margin: 8px 0 7px 37px; }
.thumbnail {
  width: 196px; height: 276px; margin-left: 35px; padding: 37px 23px 0;
  border: 2px solid #000; background: #fff;
  font: 400 4px/7px "Liberation Serif", "Times New Roman", serif;
  text-shadow: 0 0 1px #000;
}
.thumbnail h4 { font-size: 6px; line-height: 8px; color: #1f3864; }
.toc li { display: flex; }
.toc i { flex: 1; height: 5px; margin: 0 1px 0 0; border-bottom: 1px solid #bbb; }
.toc b { width: 7px; }
.toc .sub { padding-left: 3px; }
.toc .sub b { width: 12px; }
.folio { margin-top: 40px; text-align: center; }
.pager { display: flex; justify-content: space-between; margin: 11px 0 5px; width: 270px; margin-left: -2px; }
.pager .btn { width: 30px; }
.pager input { appearance: none; width: 158px; height: 20px; margin: 0; background: none; }
.pager input::-webkit-slider-runnable-track { height: 4px; background: #e7e7e7; border: 1px solid #d2d2d2; }
.pager input::-webkit-slider-thumb { appearance: none; width: 11px; height: 19px; margin-top: -7px; background: #1a7fd4; clip-path: polygon(0 0, 100% 0, 100% 70%, 50% 100%, 0 70%); }
.count { padding-right: 2px; text-align: center; }

.actions { display: flex; gap: 12px; padding: 4px 3px 0 1px; }
.actions .btn { width: 84px; }
.actions .setup { width: 89px; margin-right: auto; }

.callout { position: absolute; left: -1px; top: 280px; width: 186px; height: 49px; border: 3px solid #ee1c25; box-shadow: 0 0 1px #f88; pointer-events: none; }
```
